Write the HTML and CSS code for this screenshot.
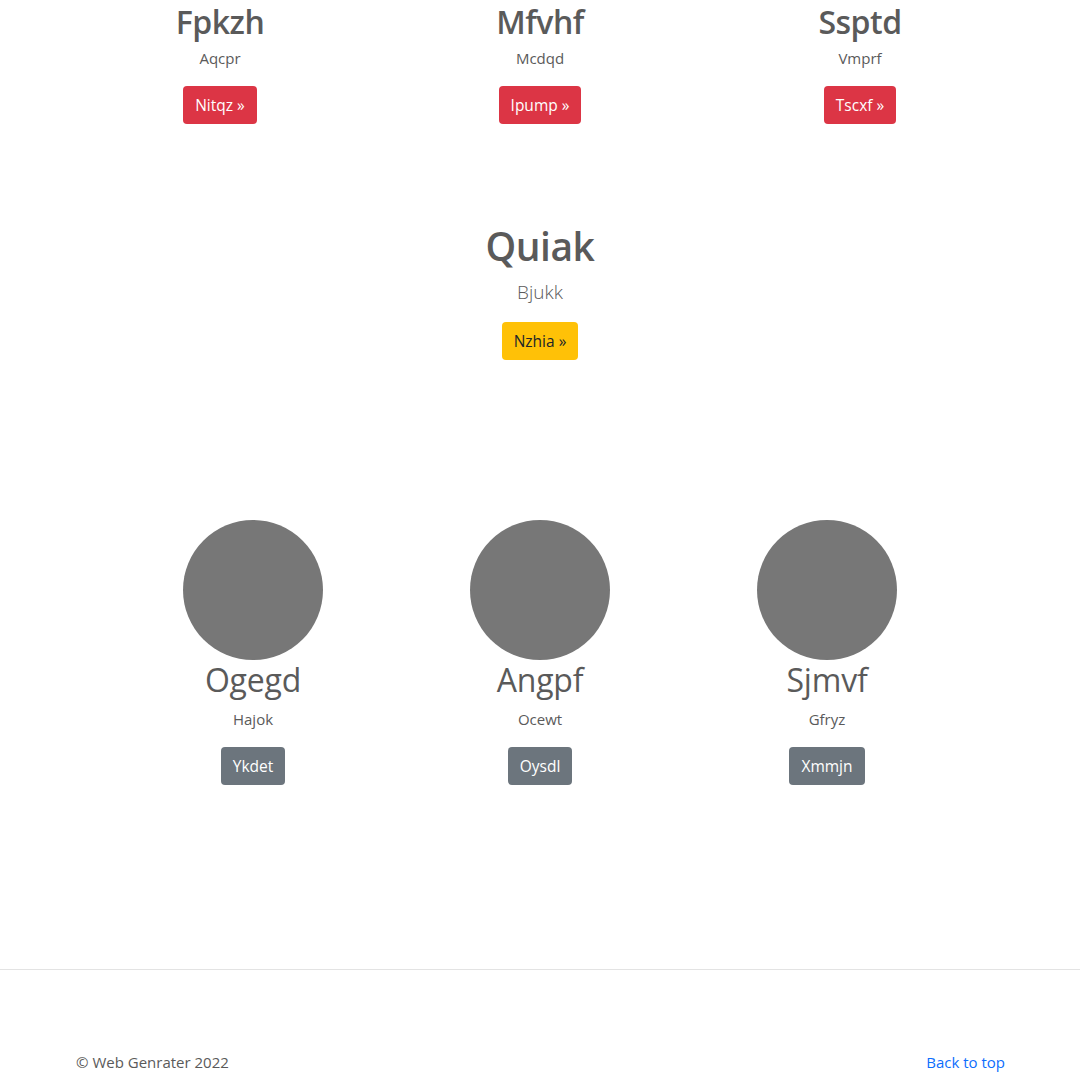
FILE: index.html
```html
<!DOCTYPE html>
<html lang="en">
<head>
<meta charset="utf-8">
<title>Marketing</title>
<link rel="stylesheet" href="styles.css">
</head>
<body>
<main class="page">
  <section class="row row-top">
    <div class="col">
      <h2 class="col-title">Fpkzh</h2>
      <p class="col-text">Aqcpr</p>
      <a class="btn btn-danger" href="#">Nitqz &raquo;</a>
    </div>
    <div class="col">
      <h2 class="col-title">Mfvhf</h2>
      <p class="col-text">Mcdqd</p>
      <a class="btn btn-danger" href="#">Ipump &raquo;</a>
    </div>
    <div class="col">
      <h2 class="col-title">Ssptd</h2>
      <p class="col-text">Vmprf</p>
      <a class="btn btn-danger" href="#">Tscxf &raquo;</a>
    </div>
  </section>

  <section class="hero">
    <h1 class="hero-title">Quiak</h1>
    <p class="lead">Bjukk</p>
    <a class="btn btn-warning" href="#">Nzhia &raquo;</a>
  </section>

  <section class="row row-bottom">
    <div class="col col-narrow">
      <svg class="avatar" width="140" height="140" viewBox="0 0 140 140" aria-hidden="true"><circle cx="70" cy="70" r="70" fill="#777"/></svg>
      <h2 class="name">Ogegd</h2>
      <p class="col-text">Hajok</p>
      <a class="btn btn-secondary" href="#">Ykdet</a>
    </div>
    <div class="col col-narrow">
      <svg class="avatar" width="140" height="140" viewBox="0 0 140 140" aria-hidden="true"><circle cx="70" cy="70" r="70" fill="#777"/></svg>
      <h2 class="name">Angpf</h2>
      <p class="col-text">Ocewt</p>
      <a class="btn btn-secondary" href="#">Oysdl</a>
    </div>
    <div class="col col-narrow">
      <svg class="avatar" width="140" height="140" viewBox="0 0 140 140" aria-hidden="true"><circle cx="70" cy="70" r="70" fill="#777"/></svg>
      <h2 class="name">Sjmvf</h2>
      <p class="col-text">Gfryz</p>
      <a class="btn btn-secondary" href="#">Xmmjn</a>
    </div>
  </section>

  <hr class="divider">

  <footer class="footer">
    <p class="copy">&copy; Web Genrater 2022</p>
    <a class="back" href="#">Back to top</a>
  </footer>
</main>
</body>
</html>
```

FILE: styles.css
```css
* { box-sizing: border-box; }

html, body {
  margin: 0;
  padding: 0;
  background: #fff;
}

body {
  font-family: "Open Sans", "Noto Sans", "Liberation Sans", sans-serif;
  font-size: 16px;
  line-height: 1.5;
  color: #5a5a5a;
}

.page {
  display: flex;
  flex-direction: column;
  padding-top: 3px;
}

.row {
  display: flex;
  justify-content: center;
}

.col {
  display: flex;
  flex-direction: column;
  align-items: center;
  text-align: center;
  width: 320px;
}

.col-narrow { width: 287px; }

.col-title {
  margin: 0 0 5px;
  font-size: 32px;
  line-height: 38px;
  font-weight: 600;
  letter-spacing: -0.5px;
}

.col-text {
  margin: 0 0 16px;
  font-size: 15px;
  line-height: 24px;
}

.btn {
  display: inline-block;
  padding: 6px 12px;
  font-size: 15.5px;
  line-height: 26px;
  border-radius: 4px;
  text-decoration: none;
  color: #fff;
}

.btn-danger { background: #dc3545; }
.btn-warning { background: #ffc107; color: #212529; }
.btn-secondary { background: #6c757d; }

.hero {
  display: flex;
  flex-direction: column;
  align-items: center;
  margin-top: 98px;
}

.hero-title {
  margin: 0 0 7px;
  font-size: 39px;
  line-height: 48px;
  font-weight: 600;
  letter-spacing: -0.5px;
}

.lead {
  margin: 0 0 15px;
  font-size: 19px;
  line-height: 30px;
  font-weight: 300;
}

.row-bottom { margin-top: 160px; }

.avatar { display: block; }

.name {
  margin: 1px 0 8px;
  font-size: 32px;
  line-height: 38px;
  font-weight: 400;
  letter-spacing: -0.2px;
}

.divider {
  margin: 184px 0 0;
  border: 0;
  border-top: 1px solid #e3e3e3;
  height: 0;
}

.footer {
  display: flex;
  justify-content: space-between;
  width: 100%;
  margin: 80px 0 0;
  padding: 0 75px 0 76px;
}

.copy {
  margin: 0;
  font-size: 15px;
  line-height: 24px;
}

.back {
  font-size: 15px;
  line-height: 24px;
  color: #0d6efd;
  text-decoration: none;
}
```
